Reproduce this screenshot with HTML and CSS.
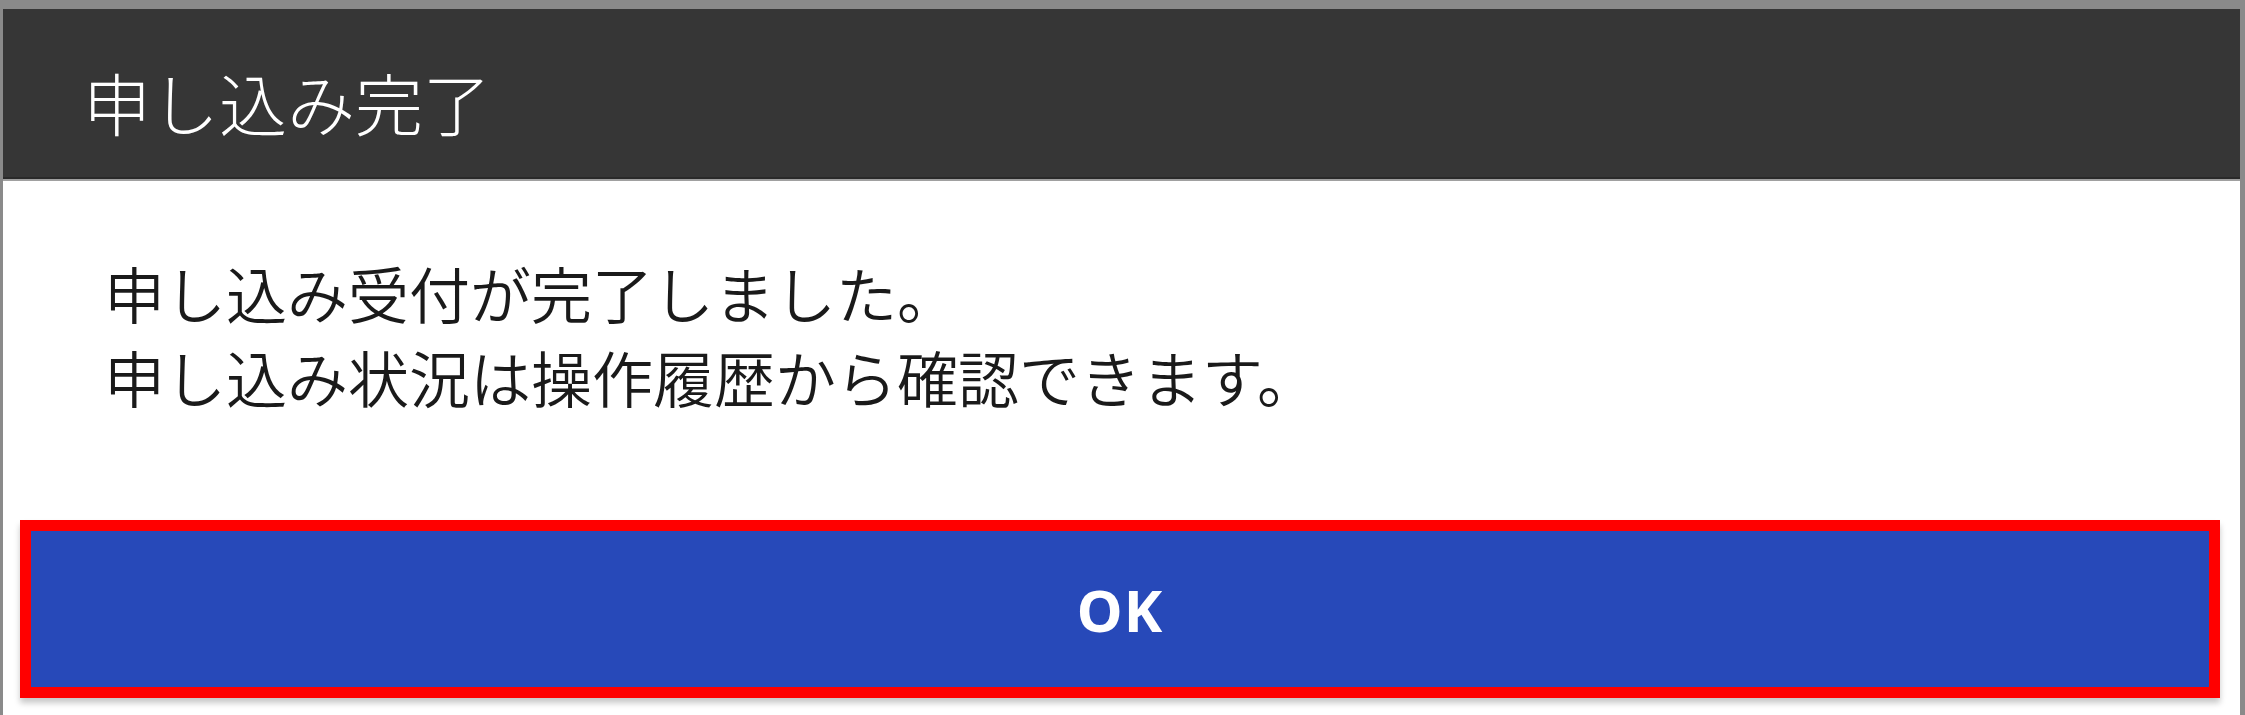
FILE: index.html
```html
<!DOCTYPE html>
<html lang="ja">
<head>
<meta charset="utf-8">
<title>申し込み完了</title>
<link rel="stylesheet" href="styles.css">
</head>
<body>
<div class="dialog">
  <div class="dialog-header">
    <h1 class="dialog-title">申し込み完了</h1>
  </div>
  <div class="dialog-body">
    <p class="message">申し込み受付が完了しました。<br>申し込み状況は操作履歴から確認できます。</p>
  </div>
  <div class="dialog-footer">
    <div class="highlight">
      <button class="ok-button" type="button">OK</button>
    </div>
  </div>
</div>
</body>
</html>
```

FILE: styles.css
```css
html, body {
  margin: 0;
  padding: 0;
  background: #ffffff;
}

body {
  width: 2245px;
  height: 715px;
  overflow: hidden;
  font-family: "Noto Sans CJK JP", "Noto Sans", sans-serif;
}

.dialog {
  box-sizing: border-box;
  height: 715px;
  border-top: 9px solid #8a8a8a;
  border-left: 3px solid #8a8a8a;
  border-right: 5px solid #8a8a8a;
  background: #ffffff;
  display: flex;
  flex-direction: column;
}

.dialog-header {
  box-sizing: border-box;
  height: 172px;
  background: #363636;
  border-bottom: 2px solid #a0a0a0;
  box-shadow: inset 0 -2px 0 #2a2a2a;
  display: flex;
  align-items: center;
  padding: 16px 0 0 80px;
}

.dialog-title {
  margin: 0;
  font-size: 68px;
  font-weight: 300;
  line-height: 1;
  color: #ffffff;
}

.dialog-body {
  padding: 70px 0 0 101px;
  height: 339px;
  box-sizing: border-box;
}

.message {
  margin: 0;
  font-size: 61px;
  line-height: 84px;
  color: #1a1a1a;
  font-weight: 350;
}

.dialog-footer {
  padding: 0 20px 0 17px;
}

.highlight {
  box-sizing: border-box;
  height: 178px;
  border: 11px solid #ff0000;
  background: #2749b9;
  box-shadow: 0 5px 6px rgba(0, 0, 0, 0.22);
}

.ok-button {
  display: block;
  width: 100%;
  height: 100%;
  margin: 0;
  padding: 0;
  border: 0;
  background: #2749b9;
  color: #ffffff;
  font-family: "Noto Sans", "Open Sans", sans-serif;
  font-weight: 700;
  font-size: 58px;
  letter-spacing: 1px;
  cursor: pointer;
}
```
